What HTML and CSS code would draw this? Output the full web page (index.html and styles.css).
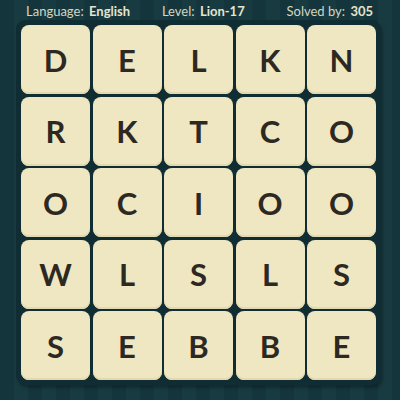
FILE: index.html
```html
<!DOCTYPE html>
<html>
<head>
<meta charset="utf-8">
<link rel="stylesheet" href="styles.css">
</head>
<body>
<div class="page">
  <div class="header">
    <span class="item">Language: <b>English</b></span>
    <span class="item mid">Level: <b>Lion-17</b></span>
    <span class="item">Solved by: <b>305</b></span>
  </div>
  <div class="board">
    <div class="tile">D</div><div class="tile">E</div><div class="tile">L</div><div class="tile">K</div><div class="tile">N</div>
    <div class="tile">R</div><div class="tile">K</div><div class="tile">T</div><div class="tile">C</div><div class="tile">O</div>
    <div class="tile">O</div><div class="tile">C</div><div class="tile">I</div><div class="tile">O</div><div class="tile">O</div>
    <div class="tile">W</div><div class="tile">L</div><div class="tile">S</div><div class="tile">L</div><div class="tile">S</div>
    <div class="tile">S</div><div class="tile">E</div><div class="tile">B</div><div class="tile">B</div><div class="tile">E</div>
  </div>
</div>
</body>
</html>
```
FILE: styles.css
```css
html, body {
  margin: 0;
  padding: 0;
}
body {
  width: 400px;
  height: 400px;
  overflow: hidden;
  background: repeating-linear-gradient(90deg, #14353b 0px, #14353b 14px, #183b41 14px, #183b41 28px);
  font-family: "Lato", "Liberation Sans", sans-serif;
}
.page {
  display: flex;
  flex-direction: column;
  align-items: flex-start;
}
.header {
  box-sizing: border-box;
  width: 400px;
  height: 20px;
  padding: 4px 27px 0 26px;
  display: flex;
  justify-content: space-between;
  color: #d4d6c0;
  font-size: 13px;
  line-height: 15px;
}
.header b {
  font-weight: 700;
  margin-left: 2px;
  color: #e4e4cf;
}
.header .mid {
  margin-left: -10px;
}
.board {
  margin-left: 16px;
  padding: 5px;
  background: #0f2d32;
  border-radius: 9px;
  display: grid;
  grid-template-columns: repeat(5, 69px);
  grid-auto-rows: 69px;
  gap: 2.5px;
  box-shadow: 2px 3px 3px rgba(0,0,0,0.25);
}
.tile {
  background: #efe7c1;
  border-radius: 8px;
  box-shadow: inset 0 -2px 0 #e3d9b0;
  display: flex;
  align-items: center;
  justify-content: center;
  color: #2d2922;
  font-size: 31px;
  font-weight: 700;
}
```
